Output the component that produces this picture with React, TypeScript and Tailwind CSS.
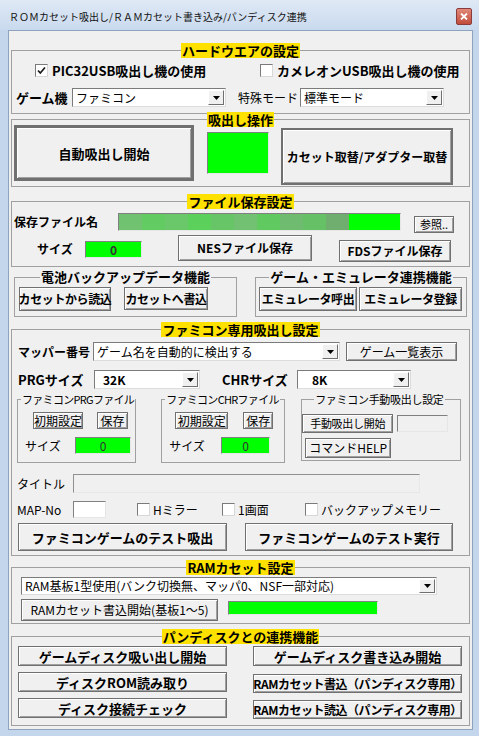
import React from "react";

const FONT = "font-['Noto_Sans_CJK_JP','Noto_Sans',sans-serif]";

function Arrow() {
  return (
    <svg width="7" height="4" viewBox="0 0 7 4" className="block">
      <path d="M0 0H7L3.5 4Z" fill="#000" />
    </svg>
  );
}

function Combo({ className, text, bold, textClass }: { className: string; text: string; bold?: boolean; textClass?: string }) {
  return (
    <div className={"flex items-stretch border border-t-[#7b7b7b] border-l-[#7b7b7b] border-r-[#dcdcdc] border-b-[#dcdcdc] bg-white " + className}>
      <div className={"flex min-w-0 flex-1 items-center overflow-hidden whitespace-nowrap text-[12px] leading-none " + (bold ? "font-bold " : "") + (textClass ?? "pl-[3px]")}>{text}</div>
      <div className="m-[1px] flex w-[16px] items-center justify-center border border-t-[#ffffff] border-l-[#ffffff] border-r-[#6f6f6f] border-b-[#6f6f6f] bg-[#f0f0f0]">
        <Arrow />
      </div>
    </div>
  );
}

function Btn({ className, children, bold }: { className: string; children: React.ReactNode; bold?: boolean }) {
  return (
    <div className={"flex shrink-0 items-center justify-center whitespace-nowrap border border-[#707070] bg-[#f0f0f0] leading-none text-black shadow-[inset_1px_1px_0_#ffffff,inset_-1px_-1px_0_#a0a0a0] " + (bold ? "font-bold " : "") + className}>
      {children}
    </div>
  );
}

function Green({ className, children }: { className: string; children?: React.ReactNode }) {
  return (
    <div className={"flex shrink-0 items-center justify-center border border-t-[#808080] border-l-[#808080] border-r-[#e6e6e6] border-b-[#e6e6e6] bg-[#00ff00] text-[12px] leading-none text-[#333333] " + className}>
      {children}
    </div>
  );
}

function Check({ checked }: { checked?: boolean }) {
  return (
    <div className="flex h-[13px] w-[13px] shrink-0 items-center justify-center border border-t-[#7a7a7a] border-l-[#7a7a7a] border-r-[#d8d8d8] border-b-[#d8d8d8] bg-white">
      {checked && (
        <svg width="9" height="9" viewBox="0 0 9 9">
          <path d="M1 4.5L3.3 7L8 1.5" fill="none" stroke="#1a1a1a" strokeWidth="1.7" />
        </svg>
      )}
    </div>
  );
}

function Section({ title, className, children }: { title: string; className: string; children: React.ReactNode }) {
  return (
    <fieldset className={"mx-[2px] shrink-0 border border-[#a0a0a0] " + className}>
      <legend className="mx-auto whitespace-nowrap bg-[#ffe100] px-[1px] text-[13px] font-bold leading-[15px] text-black">{title}</legend>
      {children}
    </fieldset>
  );
}

function Group({ title, className, children, center, bold, legendClass }: { title: string; className: string; children: React.ReactNode; center?: boolean; bold?: boolean; legendClass?: string }) {
  return (
    <fieldset className={"shrink-0 border border-[#a0a0a0] " + className}>
      <legend className={(center ? "mx-auto " : "") + (bold ? "text-[13px] font-bold " : "") + "whitespace-nowrap px-[1px] leading-[14px] text-black " + (legendClass ?? "")}>{title}</legend>
      {children}
    </fieldset>
  );
}

function Blurred() {
  const cols = [
    "bg-[#70c270]",
    "bg-[#62cc62]",
    "bg-[#6ac76a]",
    "bg-[#5bd05b]",
    "bg-[#67c467]",
    "bg-[#72c072]",
    "bg-[#60ca60]",
    "bg-[#6fbb6f]",
    "bg-[#66c066]",
    "bg-[#6fae6f]",
  ];
  return (
    <div className="flex h-[18px] w-[283px] shrink-0 border border-t-[#808080] border-l-[#808080] border-r-[#e6e6e6] border-b-[#e6e6e6]">
      {cols.map((c, i) => (
        <div key={i} className={"h-full w-[23px] " + c} />
      ))}
      <div className="h-full flex-1 bg-[#00ff00]" />
    </div>
  );
}

export default function App() {
  return (
    <div className={"relative h-[736px] w-[479px] overflow-hidden bg-[#c4d6ec] text-black " + FONT}>
      {/* title bar */}
      <div className="flex h-[30px] items-start bg-gradient-to-b from-[#dfe9f5] to-[#c9daee]">
        <div className="ml-[9px] mt-[11px] whitespace-nowrap text-[10px] leading-[12px] text-[#111]">
          ＲＯＭカセット吸出し/ＲＡＭカセット書き込み/パンディスク連携
        </div>
        <div className="ml-auto mr-[7px] mt-[8px] flex h-[17px] w-[16px] items-center justify-center rounded-[2px] border border-[#8b3b3b] bg-gradient-to-b from-[#e08a7a] to-[#c24a3a]">
          <svg width="8" height="7" viewBox="0 0 8 7">
            <path d="M1 0.5L7 6.5M7 0.5L1 6.5" stroke="#ffffff" strokeWidth="1.8" />
          </svg>
        </div>
      </div>

      {/* client */}
      <div className="ml-[8px] mr-[6px] flex h-[700px] flex-col border border-[#8ea3bd] bg-[#f0f0f0]">
        {/* S1 */}
        <Section title="ハードウエアの設定" className="mt-[12px] h-[71px]">
          <div className="mt-[4px] flex h-[16px] items-center">
            <div className="flex w-[248px] items-center pl-[23px]">
              <Check checked />
              <span className="ml-[4px] whitespace-nowrap text-[13px] font-bold leading-none">PIC32USB吸出し機の使用</span>
            </div>
            <div className="flex items-center">
              <Check />
              <span className="ml-[4px] whitespace-nowrap text-[13px] font-bold leading-none">カメレオンUSB吸出し機の使用</span>
            </div>
          </div>
          <div className="mt-[10px] flex h-[19px] items-center">
            <div className="ml-[4px] w-[56px] whitespace-nowrap text-[13px] font-bold leading-none">ゲーム機</div>
            <Combo className="h-[19px] w-[154px]" text="ファミコン" />
            <div className="ml-[12px] w-[62px] whitespace-nowrap text-[12px] leading-none">特殊モード</div>
            <Combo className="h-[19px] w-[144px]" text="標準モード" />
          </div>
        </Section>

        {/* S2 */}
        <Section title="吸出し操作" className="mt-[-2px] h-[75px]">
          <div className="mt-[-2px] flex items-start">
            <Btn bold className="ml-[2px] h-[56px] w-[180px] border-[3px] border-[#6a6a6a] text-[13px]">自動吸出し開始</Btn>
            <Green className="ml-[13px] mt-[7px] h-[42px] w-[62px]" />
            <Btn bold className="ml-[12px] mt-[3px] h-[57px] w-[172px] border-2 border-[#7a7a7a] text-[12px]">カセット取替/アダプター取替</Btn>
          </div>
        </Section>

        {/* S3 */}
        <Section title="ファイル保存設定" className="mt-[7px] h-[73px]">
          <div className="mt-[3px] flex h-[20px] items-center">
            <div className="ml-[2px] w-[104px] whitespace-nowrap text-[12px] font-bold leading-none">保存ファイル名</div>
            <Blurred />
            <Btn className="ml-[13px] mt-[4px] h-[17px] w-[40px] text-[11px]">参照..</Btn>
          </div>
          <div className="mt-[3px] flex items-start">
            <div className="ml-[25px] mt-[8px] w-[48px] whitespace-nowrap text-[12px] font-bold leading-[12px]">サイズ</div>
            <Green className="mt-[6px] h-[17px] w-[57px] font-bold">0</Green>
            <Btn bold className="ml-[36px] h-[26px] w-[134px] text-[12px]">NESファイル保存</Btn>
            <Btn bold className="ml-[27px] mt-[5px] h-[22px] w-[112px] text-[12px]">FDSファイル保存</Btn>
          </div>
        </Section>

        {/* S4 */}
        <div className="ml-[5px] mt-[3px] flex shrink-0 items-start">
          <Group title="電池バックアップデータ機能" center bold className="h-[47px] w-[223px]">
            <div className="mt-[3px] flex items-start">
              <Btn bold className="ml-[4px] h-[24px] w-[92px] text-[12px] tracking-[-0.4px]">カセットから読込</Btn>
              <Btn bold className="ml-[13px] h-[23px] w-[84px] text-[12px] tracking-[-0.4px]">カセットへ書込</Btn>
            </div>
          </Group>
          <Group title="ゲーム・エミュレータ連携機能" center bold className="ml-[18px] h-[47px] w-[212px]">
            <div className="mt-[3px] flex items-start">
              <Btn bold className="ml-[3px] h-[24px] w-[98px] text-[12px] tracking-[-0.4px]">エミュレータ呼出</Btn>
              <Btn bold className="ml-[2px] h-[24px] w-[103px] text-[12px] tracking-[-0.4px]">エミュレータ登録</Btn>
            </div>
          </Group>
        </div>

        {/* S5 */}
        <Section title="ファミコン専用吸出し設定" className="mt-[5px] h-[234px]">
          <div className="mt-[5px] flex h-[19px] items-center">
            <div className="ml-[6px] w-[75px] whitespace-nowrap text-[12px] font-bold leading-none">マッパー番号</div>
            <Combo className="h-[19px] w-[247px]" text="ゲーム名を自動的に検出する" />
            <Btn className="ml-[6px] h-[19px] w-[111px] text-[12px]">ゲーム一覧表示</Btn>
          </div>
          <div className="mt-[9px] flex h-[19px] items-center">
            <div className="ml-[6px] w-[76px] whitespace-nowrap text-[13px] font-bold leading-none">PRGサイズ</div>
            <Combo className="h-[19px] w-[106px]" text="32K" bold textClass="pl-[8px]" />
            <div className="ml-[22px] w-[75px] whitespace-nowrap text-[13px] font-bold leading-none">CHRサイズ</div>
            <Combo className="h-[19px] w-[114px]" text="8K" bold textClass="pl-[14px]" />
          </div>
          <div className="mt-[3px] flex items-start">
            <Group title="ファミコンPRGファイル" className="ml-[5px] h-[71px] w-[116px]" legendClass="ml-[3px] text-[11px] tracking-[-0.7px]">
              <div className="mt-[6px] flex h-[17px] items-center">
                <Btn className="ml-[15px] h-[17px] w-[50px] text-[12px]">初期設定</Btn>
                <Btn className="ml-[14px] h-[17px] w-[31px] text-[12px]">保存</Btn>
              </div>
              <div className="mt-[8px] flex h-[17px] items-center">
                <div className="ml-[7px] w-[50px] whitespace-nowrap text-[12px] leading-none">サイズ</div>
                <Green className="h-[17px] w-[56px]">0</Green>
              </div>
            </Group>
            <Group title="ファミコンCHRファイル" className="ml-[25px] h-[71px] w-[124px]" legendClass="ml-[3px] text-[11px] tracking-[-0.7px]">
              <div className="mt-[6px] flex h-[17px] items-center">
                <Btn className="ml-[13px] h-[17px] w-[53px] text-[12px]">初期設定</Btn>
                <Btn className="ml-[15px] h-[17px] w-[30px] text-[12px]">保存</Btn>
              </div>
              <div className="mt-[8px] flex h-[17px] items-center">
                <div className="ml-[7px] w-[52px] whitespace-nowrap text-[12px] leading-none">サイズ</div>
                <Green className="h-[17px] w-[49px]">0</Green>
              </div>
            </Group>
            <Group title="ファミコン手動吸出し設定" className="ml-[16px] h-[69px] w-[160px]" legendClass="ml-[12px] text-[11px] tracking-[-0.3px]">
              <div className="mt-[8px] flex h-[19px] items-center">
                <Btn className="h-[19px] w-[91px] text-[11px] tracking-[-0.3px]">手動吸出し開始</Btn>
                <div className="ml-[4px] h-[17px] w-[51px] border border-t-[#808080] border-l-[#808080] border-r-[#e6e6e6] border-b-[#e6e6e6] bg-[#f0f0f0]" />
              </div>
              <Btn className="ml-[3px] mt-[5px] h-[20px] w-[86px] text-[12px]">コマンドHELP</Btn>
            </Group>
          </div>
          <div className="mt-[11px] flex h-[19px] items-center">
            <div className="ml-[5px] w-[56px] whitespace-nowrap text-[12px] leading-none">タイトル</div>
            <div className="h-[19px] w-[347px] border border-t-[#909090] border-l-[#909090] border-r-[#e8e8e8] border-b-[#e8e8e8] bg-[#f0f0f0]" />
          </div>
          <div className="mt-[8px] flex h-[17px] items-center">
            <div className="ml-[5px] w-[56px] whitespace-nowrap text-[12px] leading-none">MAP-No</div>
            <div className="h-[17px] w-[33px] border border-t-[#808080] border-l-[#808080] border-r-[#e6e6e6] border-b-[#e6e6e6] bg-white" />
            <div className="ml-[31px] flex w-[85px] items-center">
              <Check />
              <span className="ml-[3px] whitespace-nowrap text-[12px] leading-none">Hミラー</span>
            </div>
            <div className="flex w-[83px] items-center">
              <Check />
              <span className="ml-[3px] whitespace-nowrap text-[12px] leading-none">1画面</span>
            </div>
            <div className="flex items-center">
              <Check />
              <span className="ml-[3px] whitespace-nowrap text-[12px] leading-none">バックアップメモリー</span>
            </div>
          </div>
          <div className="mt-[5px] flex items-start">
            <Btn bold className="ml-[6px] h-[28px] w-[209px] text-[13px]">ファミコンゲームのテスト吸出</Btn>
            <Btn bold className="ml-[18px] h-[28px] w-[208px] text-[13px]">ファミコンゲームのテスト実行</Btn>
          </div>
        </Section>

        {/* S6 */}
        <Section title="RAMカセット設定" className="mt-[4px] h-[64px]">
          <Combo className="ml-[9px] mt-[2px] h-[18px] w-[416px]" text="RAM基板1型使用(バンク切換無、マッパ0、NSF一部対応)" />
          <div className="mt-[4px] flex items-start">
            <Btn className="ml-[9px] h-[22px] w-[197px] text-[12px]">RAMカセット書込開始(基板1～5)</Btn>
            <Green className="ml-[10px] mt-[2px] h-[14px] w-[150px]" />
          </div>
        </Section>

        {/* S7 */}
        <Section title="パンディスクとの連携機能" className="mt-[5px] h-[97px]">
          <div className="flex items-start">
            <div className="ml-[6px] flex w-[209px] flex-col">
              <Btn bold className="mt-[2px] h-[20px] w-[209px] text-[13px]">ゲームディスク吸い出し開始</Btn>
              <Btn bold className="mt-[6px] h-[20px] w-[209px] text-[13px]">ディスクROM読み取り</Btn>
              <Btn bold className="mt-[6px] h-[20px] w-[209px] text-[13px]">ディスク接続チェック</Btn>
            </div>
            <div className="ml-[26px] flex w-[209px] flex-col">
              <Btn bold className="mt-[2px] h-[20px] w-[209px] text-[13px]">ゲームディスク書き込み開始</Btn>
              <Btn bold className="mt-[8px] h-[19px] w-[209px] text-[12px] tracking-[-0.5px]">RAMカセット書込（パンディスク専用）</Btn>
              <Btn bold className="mt-[7px] h-[19px] w-[209px] text-[12px] tracking-[-0.5px]">RAMカセット読込（パンディスク専用）</Btn>
            </div>
          </div>
        </Section>
      </div>
    </div>
  );
}
